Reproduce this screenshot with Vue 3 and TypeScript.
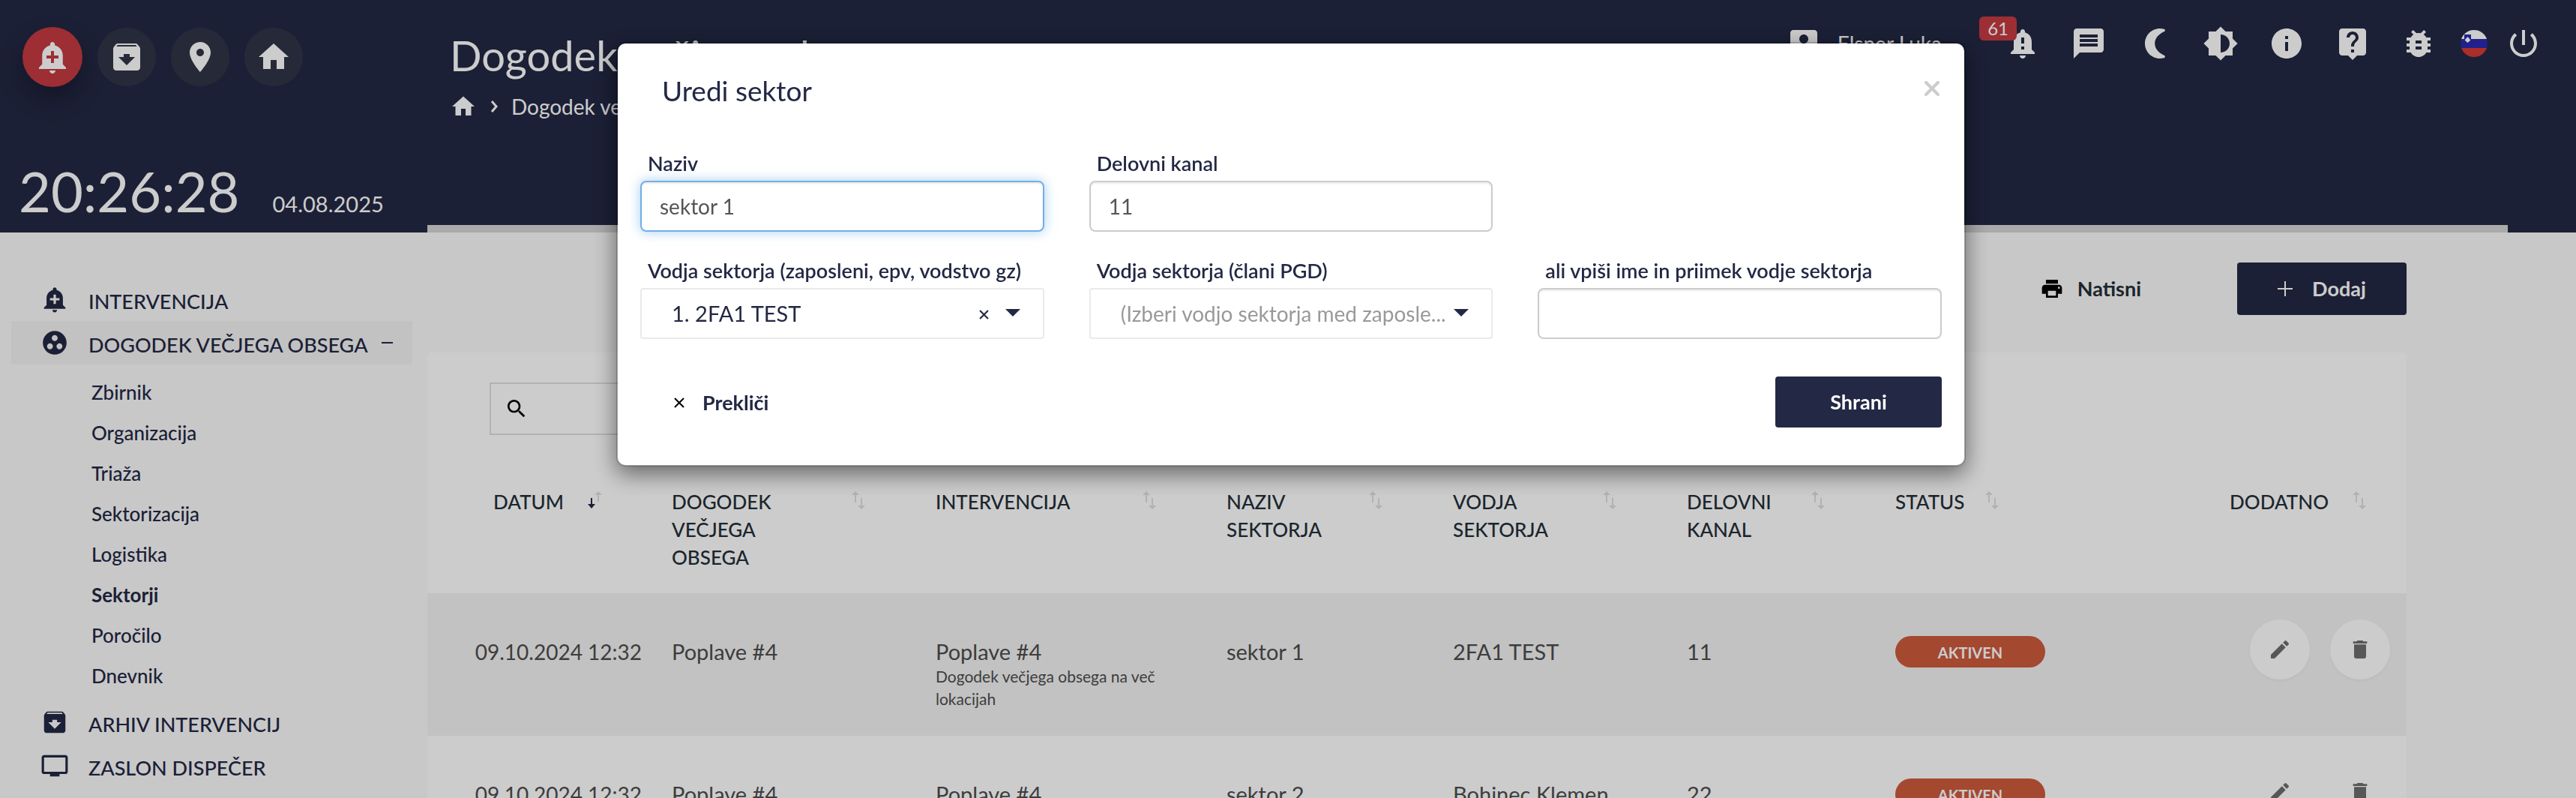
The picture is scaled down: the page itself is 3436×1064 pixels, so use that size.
<script setup lang="ts">
import { ref } from 'vue'

interface Row {
  date: string
  event: string
  incident: string
  note: string
  sector: string
  leader: string
  channel: string
  status: string
}

interface Column {
  label: string
  width: number
  align?: 'right'
  sorted?: boolean
}

const icons: Record<string, string> = {
  alertAdd:
    'M10.01 21.01c0 1.1.89 1.99 1.99 1.99s1.99-.89 1.99-1.99h-3.98zm8.87-4.19V11c0-3.25-2.25-5.97-5.29-6.69v-.72C13.59 2.71 12.88 2 12 2s-1.59.71-1.59 1.59v.72C7.37 5.03 5.12 7.75 5.12 11v5.82L3 18.94V20h18v-1.06l-2.12-2.12zM16 13.01h-3v3h-2v-3H8V11h3V8h2v3h3v2.01z',
  archive:
    'M20.54 5.23l-1.39-1.68C18.88 3.21 18.47 3 18 3H6c-.47 0-.88.21-1.16.55L3.46 5.23C3.17 5.57 3 6.02 3 6.5V19c0 1.1.9 2 2 2h14c1.1 0 2-.9 2-2V6.5c0-.48-.17-.93-.46-1.27zM12 17.5L6.5 12H10v-2h4v2h3.5L12 17.5zM5.12 5l.81-1h12l.94 1H5.12z',
  place:
    'M12 2C8.13 2 5 5.13 5 9c0 5.25 7 13 7 13s7-7.75 7-13c0-3.87-3.13-7-7-7zm0 9.5c-1.38 0-2.5-1.12-2.5-2.5s1.12-2.5 2.5-2.5 2.5 1.12 2.5 2.5-1.12 2.5-2.5 2.5z',
  home: 'M10 20v-6h4v6h5v-8h3L12 3 2 12h3v8z',
  account:
    'M3 5v14c0 1.1.89 2 2 2h14c1.1 0 2-.9 2-2V5c0-1.1-.9-2-2-2H5c-1.11 0-2 .9-2 2zm12 4c0 1.66-1.34 3-3 3s-3-1.34-3-3 1.34-3 3-3 3 1.34 3 3zm-9 8c0-2 4-3.1 6-3.1s6 1.1 6 3.1v1H6v-1z',
  alert:
    'M18 16v-5c0-3.07-1.64-5.64-4.5-6.32V4c0-.83-.67-1.5-1.5-1.5s-1.5.67-1.5 1.5v.68C7.63 5.36 6 7.92 6 11v5l-2 2v1h16v-1l-2-2zm-5 0h-2v-2h2v2zm0-4h-2V8h2v4zm-1 10c1.1 0 2-.9 2-2h-4c0 1.1.89 2 2 2z',
  message:
    'M20 2H4c-1.1 0-1.99.9-1.99 2L2 22l4-4h14c1.1 0 2-.9 2-2V4c0-1.1-.9-2-2-2zm-2 12H6v-2h12v2zm0-3H6V9h12v2zm0-3H6V6h12v2z',
  moon: 'M15.5 2C9.98 2 5.5 6.48 5.5 12s4.48 10 10 10c.95 0 1.88-.13 2.76-.38.8-.24.9-1.2.23-1.67C14.7 18.3 12.1 15.5 12.1 12s2.6-6.3 6.39-7.95c.67-.47.57-1.43-.23-1.67C17.38 2.13 16.45 2 15.5 2z',
  brightness:
    'M20 15.31L23.31 12 20 8.69V4h-4.69L12 .69 8.69 4H4v4.69L.69 12 4 15.31V20h4.69L12 23.31 15.31 20H20v-4.69zM12 18V6c3.31 0 6 2.69 6 6s-2.69 6-6 6z',
  info: 'M12 2C6.48 2 2 6.48 2 12s4.48 10 10 10 10-4.48 10-10S17.52 2 12 2zm1 15h-2v-6h2v6zm0-8h-2V7h2v2z',
  help: 'M19 2H5c-1.11 0-2 .9-2 2v14c0 1.1.89 2 2 2h4l3 3 3-3h4c1.1 0 2-.9 2-2V4c0-1.1-.9-2-2-2zm-6 16h-2v-2h2v2zm2.07-7.75l-.9.92C13.45 11.9 13 12.5 13 14h-2v-.5c0-1.1.45-2.1 1.17-2.83l1.24-1.26c.37-.36.59-.86.59-1.41 0-1.1-.9-2-2-2s-2 .9-2 2H8c0-2.21 1.79-4 4-4s4 1.79 4 4c0 .88-.36 1.68-.93 2.25z',
  bug: 'M20 8h-2.81c-.45-.78-1.07-1.45-1.82-1.96L17 4.41 15.59 3l-2.17 2.17C12.96 5.06 12.49 5 12 5c-.49 0-.96.06-1.41.17L8.41 3 7 4.41l1.62 1.63C7.88 6.55 7.26 7.22 6.81 8H4v2h2.09c-.05.33-.09.66-.09 1v1H4v2h2v1c0 .34.04.67.09 1H4v2h2.81c1.04 1.79 2.97 3 5.19 3s4.15-1.21 5.19-3H20v-2h-2.09c.05-.33.09-.66.09-1v-1h2v-2h-2v-1c0-.34-.04-.67-.09-1H20V8zm-6 8h-4v-2h4v2zm0-4h-4v-2h4v2z',
  power:
    'M13 3h-2v10h2V3zm4.83 2.17l-1.42 1.42C17.99 7.86 19 9.81 19 12c0 3.87-3.13 7-7 7s-7-3.13-7-7c0-2.19 1.01-4.14 2.58-5.42L6.17 5.17C4.23 6.82 3 9.26 3 12c0 4.97 4.03 9 9 9s9-4.03 9-9c0-2.74-1.23-5.18-3.17-6.83z',
  group:
    'M12 2C6.48 2 2 6.48 2 12s4.48 10 10 10 10-4.48 10-10S17.52 2 12 2zM8 17.5c-1.38 0-2.5-1.12-2.5-2.5s1.12-2.5 2.5-2.5 2.5 1.12 2.5 2.5-1.12 2.5-2.5 2.5zM9.5 8c0-1.38 1.12-2.5 2.5-2.5s2.5 1.12 2.5 2.5-1.12 2.5-2.5 2.5S9.5 9.38 9.5 8zm6.5 9.5c-1.38 0-2.5-1.12-2.5-2.5s1.12-2.5 2.5-2.5 2.5 1.12 2.5 2.5-1.12 2.5-2.5 2.5z',
  tv: 'M21 3H3c-1.1 0-2 .9-2 2v12c0 1.1.9 2 2 2h5v2h8v-2h5c1.1 0 1.99-.9 1.99-2L23 5c0-1.1-.9-2-2-2zm0 14H3V5h18v12z',
  print:
    'M19 8H5c-1.66 0-3 1.34-3 3v6h4v4h12v-4h4v-6c0-1.66-1.34-3-3-3zm-3 11H8v-5h8v5zm3-7c-.55 0-1-.45-1-1s.45-1 1-1 1 .45 1 1-.45 1-1 1zm-1-9H6v4h12V3z',
  search:
    'M15.5 14h-.79l-.28-.27C15.41 12.59 16 11.11 16 9.5 16 5.91 13.09 3 9.5 3S3 5.91 3 9.5 5.91 16 9.5 16c1.61 0 3.09-.59 4.23-1.57l.27.28v.79l5 4.99L20.49 19l-4.99-5zm-6 0C7.01 14 5 11.99 5 9.5S7.01 5 9.5 5 14 7.01 14 9.5 11.99 14 9.5 14z',
  edit: 'M3 17.25V21h3.75L17.81 9.94l-3.75-3.75L3 17.25zM20.71 7.04c.39-.39.39-1.02 0-1.41l-2.34-2.34c-.39-.39-1.02-.39-1.41 0l-1.83 1.83 3.75 3.75 1.83-1.83z',
  trash: 'M6 19c0 1.1.9 2 2 2h8c1.1 0 2-.9 2-2V7H6v12zM19 4h-3.5l-1-1h-5l-1 1H5v2h14V4z',
}

const quickActions = [
  { icon: 'archive', label: 'Arhiv' },
  { icon: 'place', label: 'Zemljevid' },
  { icon: 'home', label: 'Domov' },
]

const tools = [
  { icon: 'message', label: 'Sporočila' },
  { icon: 'moon', label: 'Nočni način' },
  { icon: 'brightness', label: 'Kontrast' },
  { icon: 'info', label: 'Informacije' },
  { icon: 'help', label: 'Pomoč' },
  { icon: 'bug', label: 'Prijavi napako' },
]

const subItems = ['Zbirnik', 'Organizacija', 'Triaža', 'Sektorizacija', 'Logistika', 'Sektorji', 'Poročilo', 'Dnevnik']

const columns: Column[] = [
  { label: 'DATUM', width: 286, align: 'right', sorted: true },
  { label: 'DOGODEK VEČJEGA OBSEGA', width: 352 },
  { label: 'INTERVENCIJA', width: 388 },
  { label: 'NAZIV SEKTORJA', width: 302 },
  { label: 'VODJA SEKTORJA', width: 312 },
  { label: 'DELOVNI KANAL', width: 278 },
  { label: 'STATUS', width: 232 },
  { label: 'DODATNO', width: 490, align: 'right' },
]

const rows: Row[] = [
  {
    date: '09.10.2024 12:32',
    event: 'Poplave #4',
    incident: 'Poplave #4',
    note: 'Dogodek večjega obsega na več lokacijah',
    sector: 'sektor 1',
    leader: '2FA1 TEST',
    channel: '11',
    status: 'AKTIVEN',
  },
  {
    date: '09.10.2024 12:32',
    event: 'Poplave #4',
    incident: 'Poplave #4',
    note: 'Dogodek večjega obsega na več lokacijah',
    sector: 'sektor 2',
    leader: 'Bohinec Klemen',
    channel: '22',
    status: 'AKTIVEN',
  },
]

const query = ref('')
const name = ref('sektor 1')
const channel = ref('11')
const staffLeader = ref('2fa1')
const memberLeader = ref('')
const customLeader = ref('')
</script>

<template>
  <div class="app">
    <header class="header">
      <div class="brand">
        <div class="quick">
          <button class="round alarm" type="button" aria-label="Nova intervencija">
            <svg class="icon" viewBox="0 0 24 24"><path :d="icons.alertAdd" /></svg>
          </button>
          <button v-for="a in quickActions" :key="a.icon" class="round" type="button" :aria-label="a.label">
            <svg class="icon" viewBox="0 0 24 24"><path :d="icons[a.icon]" /></svg>
          </button>
        </div>
        <div class="clock">
          <time class="time">20:26:28</time>
          <time class="date">04.08.2025</time>
        </div>
      </div>
      <div class="head-main">
        <div class="head-row">
          <div class="heading">
            <h1>Dogodek večjega obsega</h1>
            <nav class="crumbs" aria-label="Pot">
              <a href="#" aria-label="Domov"><svg class="icon crumb-home" viewBox="0 0 24 24"><path :d="icons.home" /></svg></a>
              <svg class="chevron" viewBox="0 0 10 16"><path d="M2 1l6 7-6 7" /></svg>
              <a href="#">Dogodek večjega obsega</a>
            </nav>
          </div>
          <div class="toolbar">
            <a class="user" href="#">
              <svg class="icon" viewBox="0 0 24 24"><path :d="icons.account" /></svg>
              <span>Elsner Luka</span>
            </a>
            <button class="tool" type="button" aria-label="Obvestila">
              <svg class="icon" viewBox="0 0 24 24"><path :d="icons.alert" /></svg>
              <span class="badge">61</span>
            </button>
            <button v-for="t in tools" :key="t.icon" class="tool" type="button" :aria-label="t.label">
              <svg class="icon" viewBox="0 0 24 24"><path :d="icons[t.icon]" /></svg>
            </button>
            <button class="tool flag" type="button" aria-label="Slovenščina">
              <svg viewBox="0 0 36 36">
                <clipPath id="flag-clip"><circle cx="18" cy="18" r="18" /></clipPath>
                <g clip-path="url(#flag-clip)">
                  <path fill="#fff" d="M0 0h36v12H0z" />
                  <path fill="#2a2aaf" d="M0 12h36v12H0z" />
                  <path fill="#d53a35" d="M0 24h36v12H0z" />
                  <path fill="#2a2aaf" d="M5 6h9v7c0 3-2 4-4.5 6C7 17 5 16 5 13z" />
                  <path fill="#fff" d="M6 13l3.500-4 3.500 4v1l-3.500 3L6 14z" />
                </g>
              </svg>
            </button>
            <button class="tool" type="button" aria-label="Odjava">
              <svg class="icon" viewBox="0 0 24 24"><path :d="icons.power" /></svg>
            </button>
          </div>
        </div>
        <div class="strip"></div>
      </div>
    </header>

    <div class="body">
      <nav class="side" aria-label="Glavni meni">
        <a class="item" href="#"><svg class="icon" viewBox="0 0 24 24"><path :d="icons.alertAdd" /></svg><span>INTERVENCIJA</span></a>
        <a class="item active" href="#">
          <svg class="icon" viewBox="0 0 24 24"><path :d="icons.group" /></svg><span>DOGODEK VEČJEGA OBSEGA</span>
          <i class="minus"></i>
        </a>
        <div class="sub">
          <a v-for="s in subItems" :key="s" href="#" :class="{ current: s === 'Sektorji' }">{{ s }}</a>
        </div>
        <a class="item" href="#"><svg class="icon" viewBox="0 0 24 24"><path :d="icons.archive" /></svg><span>ARHIV INTERVENCIJ</span></a>
        <a class="item" href="#"><svg class="icon" viewBox="0 0 24 24"><path :d="icons.tv" /></svg><span>ZASLON DISPEČER</span></a>
      </nav>

      <main class="main">
        <div class="actions">
          <button class="print" type="button">
            <svg class="icon" viewBox="0 0 24 24"><path :d="icons.print" /></svg>Natisni
          </button>
          <button class="primary add" type="button">
            <svg class="plus" viewBox="0 0 20 20"><path d="M10 0v20M0 10h20" /></svg>Dodaj
          </button>
        </div>
        <section class="card">
          <label class="search">
            <svg class="icon" viewBox="0 0 24 24"><path :d="icons.search" /></svg>
            <input v-model="query" type="search" aria-label="Iskanje" />
          </label>
          <table>
            <colgroup>
              <col v-for="c in columns" :key="c.label" :style="{ width: c.width + 'px' }" />
            </colgroup>
            <thead>
              <tr>
                <th v-for="c in columns" :key="c.label" scope="col">
                  <div class="th" :class="[c.align]">
                    <span>{{ c.label }}</span>
                    <svg class="sort" viewBox="0 0 18 24">
                      <template v-if="c.sorted">
                        <path class="faint" d="M14 0l5 5h-4v9h-2V5H9z" />
                        <path class="strong" d="M5 23l-5-6h4V9h2v8h4z" />
                      </template>
                      <path v-else class="faint" d="M5 0l5 5H6v10H4V5H0zM13 24l-5-5h4V9h2v10h4z" />
                    </svg>
                  </div>
                </th>
              </tr>
            </thead>
            <tbody>
              <tr v-for="r in rows" :key="r.sector">
                <td class="right">{{ r.date }}</td>
                <td>{{ r.event }}</td>
                <td>{{ r.incident }}<small>{{ r.note }}</small></td>
                <td>{{ r.sector }}</td>
                <td>{{ r.leader }}</td>
                <td>{{ r.channel }}</td>
                <td class="status"><span class="pill">{{ r.status }}</span></td>
                <td class="ops">
                  <div>
                    <button type="button" aria-label="Uredi"><svg class="icon" viewBox="0 0 24 24"><path :d="icons.edit" /></svg></button>
                    <button type="button" aria-label="Izbriši"><svg class="icon" viewBox="0 0 24 24"><path :d="icons.trash" /></svg></button>
                  </div>
                </td>
              </tr>
            </tbody>
          </table>
        </section>
      </main>
    </div>

    <div class="backdrop">
      <form class="modal" role="dialog" aria-labelledby="dialog-title" @submit.prevent>
        <div class="modal-head">
          <h2 id="dialog-title">Uredi sektor</h2>
          <button class="close" type="button" aria-label="Zapri">
            <svg viewBox="0 0 20 20"><path d="M2 2l16 16M18 2L2 18" /></svg>
          </button>
        </div>
        <div class="fields">
          <div class="field">
            <label for="f-name">Naziv</label>
            <input id="f-name" v-model="name" class="focused" type="text" />
          </div>
          <div class="field">
            <label for="f-channel">Delovni kanal</label>
            <input id="f-channel" v-model="channel" type="text" />
          </div>
          <div class="field row-start">
            <label for="f-staff">Vodja sektorja (zaposleni, epv, vodstvo gz)</label>
            <div class="select">
              <select id="f-staff" v-model="staffLeader">
                <option value="2fa1">1. 2FA1 TEST</option>
              </select>
              <button class="clear" type="button" aria-label="Počisti">
                <svg viewBox="0 0 12 12"><path d="M1 1l10 10M11 1L1 11" /></svg>
              </button>
              <svg class="caret" viewBox="0 0 20 10"><path d="M0 0h20L10 10z" /></svg>
            </div>
          </div>
          <div class="field">
            <label for="f-member">Vodja sektorja (člani PGD)</label>
            <div class="select">
              <select id="f-member" v-model="memberLeader" class="placeholder">
                <option value="">(Izberi vodjo sektorja med zaposle...</option>
              </select>
              <svg class="caret" viewBox="0 0 20 10"><path d="M0 0h20L10 10z" /></svg>
            </div>
          </div>
          <div class="field">
            <label for="f-custom">ali vpiši ime in priimek vodje sektorja</label>
            <input id="f-custom" v-model="customLeader" type="text" />
          </div>
        </div>
        <div class="modal-foot">
          <button class="cancel" type="button">
            <svg viewBox="0 0 14 14"><path d="M1 1l12 12M13 1L1 13" /></svg>Prekliči
          </button>
          <button class="primary save" type="submit">Shrani</button>
        </div>
      </form>
    </div>
  </div>
</template>

<style>
body {
  margin: 0;
}
</style>

<style scoped>
.app,
.app * {
  box-sizing: border-box;
}
.app {
  height: 100vh;
  overflow: hidden;
  background: #fafafa;
  color: #232844;
  font-family: Lato, 'Open Sans', sans-serif;
  font-size: 28px;
  line-height: 36px;
}
button,
input,
select {
  font: inherit;
  color: inherit;
}
button {
  border: 0;
  padding: 0;
  background: none;
  cursor: pointer;
}
a {
  color: inherit;
  text-decoration: none;
}
h1,
h2 {
  margin: 0;
  font-weight: 400;
}
svg {
  display: block;
  flex: none;
}
.icon {
  width: 48px;
  height: 48px;
  fill: currentColor;
}

/* header */
.header {
  display: flex;
  height: 310px;
  background: #232844;
  color: #fff;
}
.brand {
  flex: none;
  width: 570px;
  display: flex;
  flex-direction: column;
  justify-content: space-between;
  padding: 36px 24px 10px 30px;
}
.quick {
  display: flex;
  align-items: center;
  gap: 20px;
}
.round {
  display: grid;
  place-items: center;
  width: 78px;
  height: 78px;
  border-radius: 50%;
  background: #303546;
}
.alarm {
  width: 80px;
  height: 80px;
  background: #c43a42;
  box-shadow: 0 16px 32px rgba(0, 0, 0, 0.3);
}
.clock {
  display: flex;
  align-items: baseline;
  gap: 44px;
  margin-left: -5px;
}
.time {
  font-size: 74px;
  line-height: 90px;
}
.date {
  font-size: 29px;
}
.head-main {
  flex: 1;
  min-width: 0;
  display: flex;
  flex-direction: column;
  justify-content: space-between;
}
.head-row {
  display: flex;
  justify-content: space-between;
  padding: 34px 46px 0 30px;
}
h1 {
  font-size: 56px;
  line-height: 80px;
}
.crumbs {
  display: flex;
  align-items: center;
  gap: 18px;
  margin-top: 10px;
}
.crumb-home {
  width: 36px;
  height: 36px;
}
.chevron {
  width: 10px;
  height: 16px;
  fill: none;
  stroke: currentColor;
  stroke-width: 3;
}
.toolbar {
  display: flex;
  align-items: flex-start;
  gap: 40px;
}
.user {
  display: flex;
  align-items: center;
  gap: 21px;
  margin-right: 44px;
}
.tool {
  position: relative;
  width: 48px;
  height: 48px;
}
.badge {
  position: absolute;
  right: 32px;
  top: -12px;
  padding: 0 11px;
  border-radius: 6px;
  background: #c43a42;
  font-size: 24px;
  line-height: 32px;
}
.flag {
  width: 36px;
  margin: 0 -16px 0 -8px;
}
.flag svg {
  width: 36px;
  height: 36px;
}
.strip {
  height: 10px;
  margin-right: 91px;
  background: #d5d5d5;
}

/* body */
.body {
  display: flex;
}
.side {
  flex: none;
  width: 570px;
  padding: 60px 20px 0 15px;
}
.item {
  display: flex;
  align-items: center;
  gap: 26px;
  height: 58px;
  padding-left: 39px;
  font-size: 27px;
  font-weight: 500;
}
.item .icon {
  width: 38px;
  height: 38px;
}
.item span {
  padding-top: 6px;
}
.active {
  background: #f3f3f3;
}
.minus {
  width: 15px;
  height: 2px;
  margin-left: -8px;
  background: currentColor;
}
.sub {
  display: flex;
  flex-direction: column;
  padding: 10px 0 6px 107px;
  font-size: 26px;
  font-weight: 500;
  line-height: 54px;
}
.current {
  font-weight: 700;
}
.main {
  flex: 1;
  min-width: 0;
  padding: 40px 226px 0 0;
}
.actions {
  display: flex;
  justify-content: flex-end;
  gap: 128px;
  height: 70px;
  margin-bottom: 50px;
  font-size: 27px;
  font-weight: 700;
}
.print {
  display: flex;
  align-items: center;
  gap: 18px;
  color: #242f38;
}
.print .icon {
  width: 32px;
  height: 32px;
  color: #000;
}
.primary {
  display: flex;
  align-items: center;
  justify-content: center;
  border-radius: 4px;
  background: #232844;
  color: #fff;
  font-weight: 700;
}
.add {
  gap: 26px;
  width: 226px;
}
.plus {
  width: 20px;
  height: 20px;
  stroke: currentColor;
  stroke-width: 2;
}
.card {
  padding-top: 40px;
  border-radius: 6px;
  background: #fff;
}
.search {
  display: flex;
  align-items: center;
  width: 480px;
  height: 70px;
  margin-left: 83px;
  padding: 0 18px;
  border: 2px solid #dfdfdf;
  color: #000;
}
.search .icon {
  width: 32px;
  height: 32px;
}
.search input {
  flex: 1;
  min-width: 0;
  border: 0;
  outline: 0;
  background: none;
}
table {
  width: 100%;
  table-layout: fixed;
  border-collapse: collapse;
}
th {
  height: 211px;
  padding: 71px 54px 0 40px;
  vertical-align: top;
  text-align: left;
  color: #242f38;
  font-size: 26px;
  font-weight: 500;
  line-height: 37px;
}
.th {
  display: flex;
  justify-content: space-between;
  gap: 24px;
}
.th.right {
  justify-content: flex-end;
  gap: 32px;
}
.sort {
  width: 18px;
  height: 24px;
  margin-top: 4px;
  overflow: visible;
}
.faint {
  fill: #dfdfdf;
}
.strong {
  fill: #232844;
}
td {
  height: 190px;
  padding: 60px 32px 0 40px;
  vertical-align: top;
  color: #4d4d4d;
  font-size: 29px;
}
td.right {
  padding-left: 0;
  padding-right: 0;
  font-size: 28px;
  text-align: right;
  white-space: nowrap;
}
tbody tr:nth-child(odd) {
  background: #f3f3f3;
}
small {
  display: block;
  font-size: 21px;
  line-height: 30px;
}
.status {
  padding: 57px 0 0 40px;
}
.pill {
  display: block;
  width: 200px;
  padding-top: 2px;
  border-radius: 21px;
  background: #cd5a3d;
  color: #fff;
  font-size: 20px;
  font-weight: 700;
  line-height: 40px;
  text-align: center;
}
.ops {
  padding: 35px 22px 0 0;
}
.ops div {
  display: flex;
  justify-content: flex-end;
  gap: 27px;
}
.ops button {
  display: grid;
  place-items: center;
  width: 80px;
  height: 80px;
  border-radius: 50%;
  background: #fff;
  color: #6d6d6d;
}
tbody tr:nth-child(odd) .ops button {
  box-shadow: 0 2px 4px rgba(0, 0, 0, 0.04);
}
.ops .icon {
  width: 32px;
  height: 32px;
}

/* dialog */
.backdrop {
  position: fixed;
  inset: 0;
  padding: 56px 0 0 8px;
  background: rgba(0, 0, 0, 0.2);
}
.modal {
  width: 1800px;
  max-width: 100%;
  margin: 0 auto;
  padding: 0 30px 50px;
  border: 2px solid rgba(0, 0, 0, 0.2);
  border-radius: 12px;
  background: #fff;
  background-clip: padding-box;
  box-shadow: 0 10px 30px rgba(0, 0, 0, 0.5);
}
.modal-head {
  display: flex;
  justify-content: space-between;
  padding: 38px 3px 54px 29px;
}
h2 {
  font-size: 37px;
  line-height: 50px;
}
.close {
  height: 20px;
  margin-top: 12px;
}
.close svg {
  width: 20px;
  height: 20px;
  fill: none;
  stroke: #ccc;
  stroke-width: 4;
  stroke-linecap: round;
}
.fields {
  display: grid;
  grid-template-columns: repeat(3, minmax(0, 1fr));
  gap: 34px 60px;
}
.row-start {
  grid-column: 1;
}
.field label {
  display: block;
  padding: 0 0 5px 10px;
  font-size: 27px;
  font-weight: 600;
}
.field input {
  display: block;
  width: 100%;
  height: 68px;
  padding: 0 24px;
  border: 2px solid #ccc;
  border-radius: 8px;
  outline: 0;
  background: #fff;
  color: #555;
  box-shadow: inset 0 2px 2px rgba(0, 0, 0, 0.08);
}
.field .focused {
  border-color: #74aee6;
  box-shadow: inset 0 2px 2px rgba(0, 0, 0, 0.08), 0 0 16px rgba(102, 175, 233, 0.6);
}
.select {
  position: relative;
}
.select select {
  display: block;
  width: 100%;
  height: 68px;
  padding: 0 44px 0 40px;
  border: 2px solid #eaeaea;
  border-radius: 4px;
  outline: 0;
  background: #fff;
  font-size: 29px;
  appearance: none;
}
.select .placeholder {
  color: #999;
  font-size: 28px;
}
.clear {
  position: absolute;
  right: 74px;
  top: 29px;
}
.clear svg {
  width: 13px;
  height: 13px;
  stroke: #232844;
  stroke-width: 2;
}
.caret {
  position: absolute;
  right: 32px;
  top: 28px;
  width: 20px;
  height: 10px;
  fill: #232844;
  pointer-events: none;
}
.modal-foot {
  display: flex;
  justify-content: space-between;
  margin-top: 50px;
  font-size: 27px;
}
.cancel {
  display: flex;
  align-items: center;
  gap: 24px;
  padding: 2px 0 0 45px;
  font-weight: 700;
}
.cancel svg {
  width: 14px;
  height: 14px;
  stroke: #000;
  stroke-width: 2;
}
.save {
  width: 222px;
  height: 68px;
}
</style>
